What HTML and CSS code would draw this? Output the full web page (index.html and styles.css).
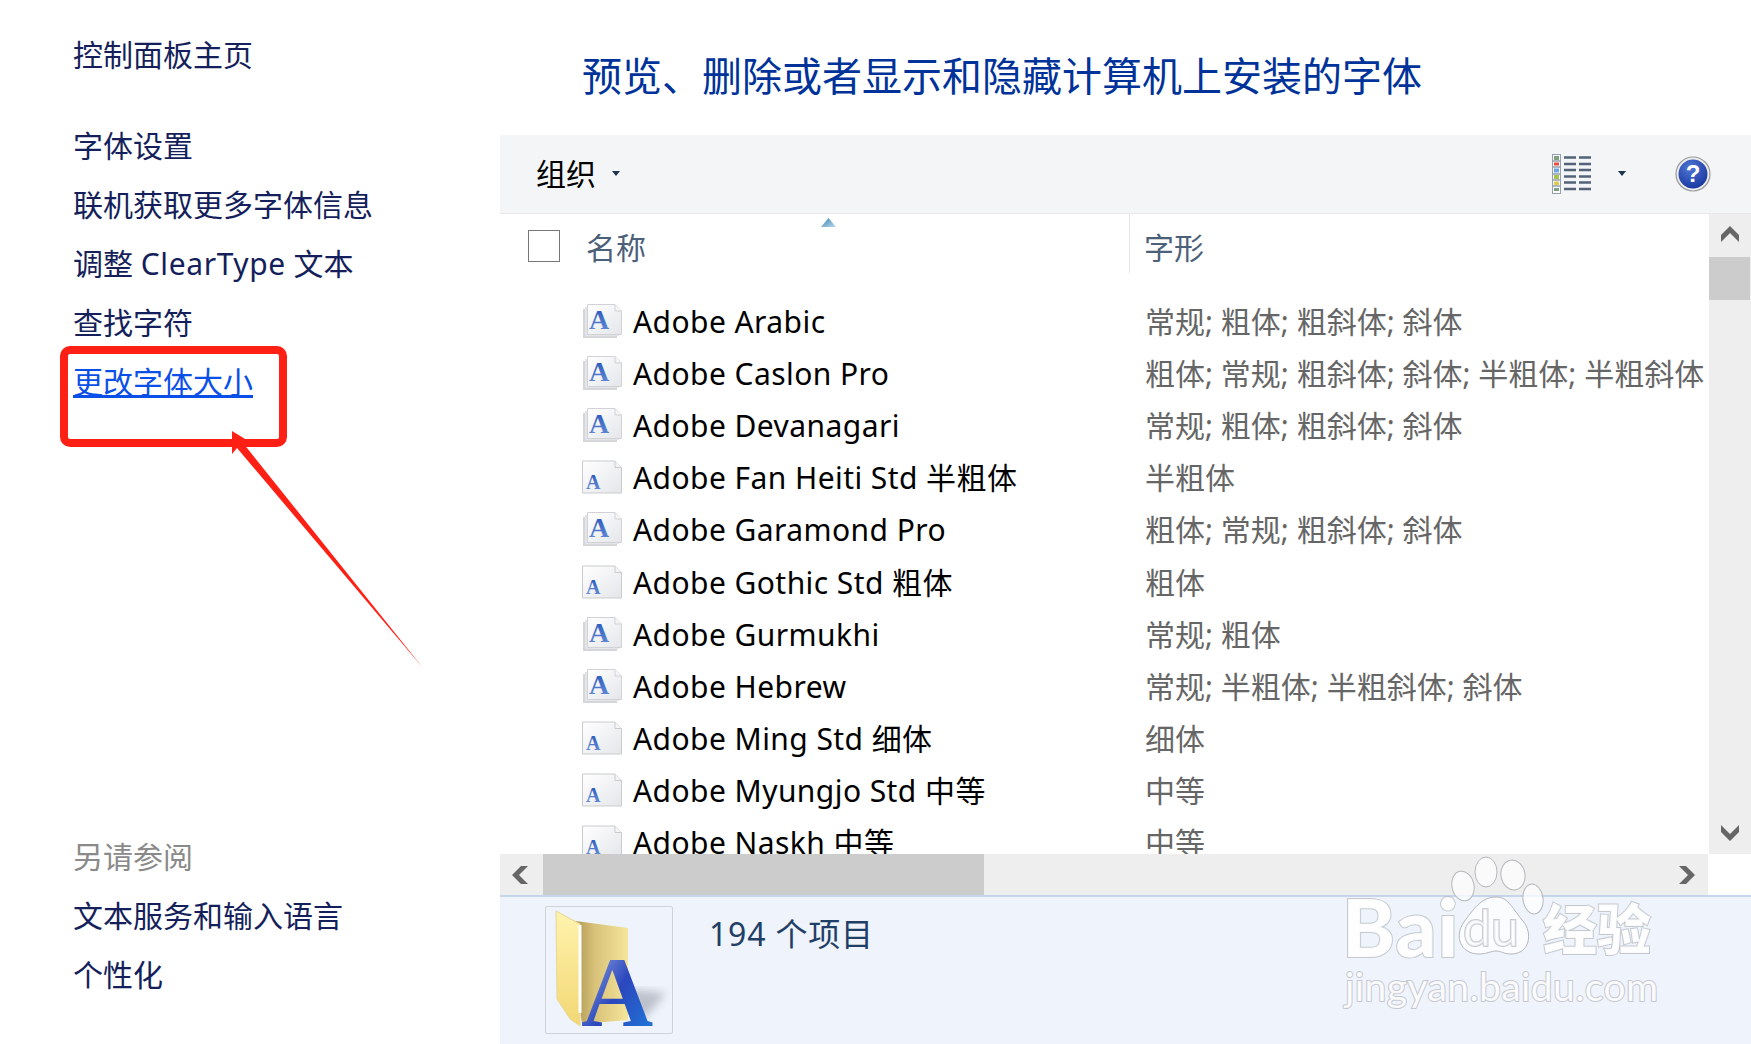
FILE: index.html
```html
<!DOCTYPE html>
<html lang="zh-CN">
<head>
<meta charset="utf-8">
<title>字体</title>
<link rel="stylesheet" href="styles.css">
</head>
<body>
<svg class="defs" width="0" height="0" aria-hidden="true">
  <defs>
    <linearGradient id="page" x1="0" y1="0" x2="1" y2="1"><stop offset="0" stop-color="#fff"/><stop offset="1" stop-color="#e4e6ea"/></linearGradient>
    <linearGradient id="ink" x1="0" y1="0" x2="0" y2="1"><stop offset="0" stop-color="#1f4fb5"/><stop offset="1" stop-color="#6d93dc"/></linearGradient>
    <linearGradient id="folderBack" x1="0" y1="0" x2="1" y2="0"><stop offset="0" stop-color="#a08a45"/><stop offset=".45" stop-color="#d9c27a"/><stop offset="1" stop-color="#f5e59a"/></linearGradient>
    <linearGradient id="folderFront" x1="0" y1="0" x2="0" y2="1"><stop offset="0" stop-color="#fff3ad"/><stop offset="1" stop-color="#f2d774"/></linearGradient>
    <linearGradient id="bigA" x1="0" y1="0" x2="1" y2="1"><stop offset="0" stop-color="#b4c4ee"/><stop offset=".5" stop-color="#2b47bd"/><stop offset="1" stop-color="#1c7fdc"/></linearGradient>
    <linearGradient id="sortArrow" x1="0" y1="0" x2="1" y2="1"><stop offset="0" stop-color="#3c7fae"/><stop offset="1" stop-color="#b9dcef"/></linearGradient>
    <radialGradient id="helpBall" cx=".4" cy=".3" r=".8"><stop offset="0" stop-color="#4f76d6"/><stop offset="1" stop-color="#14329a"/></radialGradient>
    <filter id="soft"><feGaussianBlur stdDeviation="4"/></filter>
    <symbol id="font-stack" viewBox="0 0 40 34">
      <path d="M1 5h3v27h31v2H1z" fill="#d4d6da"/>
      <path d="M3 3h3v27h31v2H3z" fill="#e3e5e8"/>
      <path d="M5.500 .5H33L39.500 7V30.500H5.500z" fill="url(#page)" stroke="#d0d2d6"/>
      <path d="M33 .5V7h6.500" fill="#f4f4f6" stroke="#d0d2d6"/>
      <text x="7" y="25" class="glyph glyph-big" fill="url(#ink)">A</text>
    </symbol>
    <symbol id="font-single" viewBox="0 0 40 33">
      <path d="M.5 .5H33L39.500 7V32.500H.5z" fill="url(#page)" stroke="#c9cbcf"/>
      <path d="M33 .5V7h6.500" fill="#f4f4f6" stroke="#c9cbcf"/>
      <text x="4" y="28" class="glyph glyph-small" fill="url(#ink)">A</text>
    </symbol>
  </defs>
</svg>

<div class="window">
  <aside class="side">
    <nav class="side-top">
      <a class="side-link home">控制面板主页</a>
      <a class="side-link">字体设置</a>
      <a class="side-link">联机获取更多字体信息</a>
      <a class="side-link">调整 <span class="latin">ClearType</span> 文本</a>
      <a class="side-link">查找字符</a>
      <a class="side-link active">更改字体大小</a>
    </nav>
    <nav class="side-bottom">
      <span class="side-link muted">另请参阅</span>
      <a class="side-link">文本服务和输入语言</a>
      <a class="side-link">个性化</a>
    </nav>
  </aside>

  <main class="main">
    <h1 class="title">预览、删除或者显示和隐藏计算机上安装的字体</h1>

    <div class="toolbar">
      <span class="organize">组织</span>
      <svg class="caret caret-left" width="8" height="5" viewBox="0 0 8 5"><path d="M0 0h8L4 5z" fill="#1e3350"/></svg>
      <svg class="view-icon" width="40" height="40" viewBox="0 0 40 40">
        <rect x="0.500" y="0.500" width="8" height="39" fill="#fff" stroke="#93a0ae"/>
        <path d="M0 7h9M0 13h9M0 20h9M0 26h9M0 32h9" stroke="#93a0ae" stroke-width="1.500"/>
        <rect x="2" y="2" width="5" height="4" fill="#7f9f80"/><rect x="2" y="8.500" width="5" height="3" fill="#ee4a3c"/>
        <rect x="2" y="14.500" width="5" height="4" fill="#6ea3e4"/><rect x="2" y="21" width="5" height="4" fill="#a9c34f"/>
        <rect x="2" y="27.500" width="5" height="3.500" fill="#dccb4d"/><rect x="2" y="34" width="5" height="3" fill="#7f9f80"/>
        <path d="M12 3.500h12m3 0h12M12 10h12m3 0h12M12 16h12m3 0h12M12 22.500h12m3 0h12M12 28.500h12m3 0h12M12 35h12m3 0h12" stroke="#52637a" stroke-width="2.400"/>
      </svg>
      <svg class="caret caret-right" width="8" height="5" viewBox="0 0 8 5"><path d="M0 0h8L4 5z" fill="#1e3350"/></svg>
      <svg class="help" width="36" height="36" viewBox="0 0 36 36">
        <circle cx="18" cy="18" r="17" fill="#eee" stroke="#9a9a9a" stroke-width="1.200"/>
        <circle cx="18" cy="18" r="14.500" fill="url(#helpBall)"/>
        <text x="18" y="26" class="help-mark">?</text>
      </svg>
    </div>

    <div class="view">
      <div class="list">
        <div class="list-head">
          <span class="check"></span>
          <span class="head-name">名称</span>
          <svg class="sort" width="15" height="9" viewBox="0 0 15 9"><path d="M7.500 0L15 9H0z" fill="url(#sortArrow)"/></svg>
          <span class="head-style">字形</span>
        </div>
        <div class="rows">
          <div class="row"><svg class="file"><use href="#font-stack"/></svg><span class="name">Adobe Arabic</span><span class="style">常规; 粗体; 粗斜体; 斜体</span></div>
          <div class="row"><svg class="file"><use href="#font-stack"/></svg><span class="name">Adobe Caslon Pro</span><span class="style">粗体; 常规; 粗斜体; 斜体; 半粗体; 半粗斜体</span></div>
          <div class="row"><svg class="file"><use href="#font-stack"/></svg><span class="name">Adobe Devanagari</span><span class="style">常规; 粗体; 粗斜体; 斜体</span></div>
          <div class="row"><svg class="file"><use href="#font-single"/></svg><span class="name">Adobe Fan Heiti Std 半粗体</span><span class="style">半粗体</span></div>
          <div class="row"><svg class="file"><use href="#font-stack"/></svg><span class="name">Adobe Garamond Pro</span><span class="style">粗体; 常规; 粗斜体; 斜体</span></div>
          <div class="row"><svg class="file"><use href="#font-single"/></svg><span class="name">Adobe Gothic Std 粗体</span><span class="style">粗体</span></div>
          <div class="row"><svg class="file"><use href="#font-stack"/></svg><span class="name">Adobe Gurmukhi</span><span class="style">常规; 粗体</span></div>
          <div class="row"><svg class="file"><use href="#font-stack"/></svg><span class="name">Adobe Hebrew</span><span class="style">常规; 半粗体; 半粗斜体; 斜体</span></div>
          <div class="row"><svg class="file"><use href="#font-single"/></svg><span class="name">Adobe Ming Std 细体</span><span class="style">细体</span></div>
          <div class="row"><svg class="file"><use href="#font-single"/></svg><span class="name">Adobe Myungjo Std 中等</span><span class="style">中等</span></div>
          <div class="row"><svg class="file"><use href="#font-single"/></svg><span class="name">Adobe Naskh 中等</span><span class="style">中等</span></div>
        </div>
      </div>
      <div class="vscroll">
        <svg class="v-arrow" width="18" height="16" viewBox="0 0 18 16"><path d="M9 0l9 9v7L9 7l-9 9V9z" fill="#666"/></svg>
        <div class="v-thumb"></div>
        <svg class="v-arrow v-down" width="18" height="16" viewBox="0 0 18 16"><path d="M9 16L0 7V0l9 9 9-9v7z" fill="#666"/></svg>
      </div>
    </div>

    <div class="hbar">
      <div class="hscroll">
        <svg class="h-arrow" width="16" height="18" viewBox="0 0 16 18"><path d="M0 9l9-9h7L7 9l9 9H9z" fill="#666"/></svg>
        <div class="h-thumb"></div>
        <svg class="h-arrow h-right" width="16" height="18" viewBox="0 0 16 18"><path d="M16 9l-9 9H0l9-9-9-9h7z" fill="#666"/></svg>
      </div>
      <div class="corner"></div>
    </div>

    <div class="status">
      <div class="thumb">
        <svg width="126" height="126" viewBox="0 0 126 126">
          <path d="M84 82l36 4-22 26-10-4z" fill="#8a8f9c" opacity=".5" filter="url(#soft)"/>
          <path d="M22 13l60 8v92l-46 4z" fill="url(#folderBack)"/>
          <path d="M10 4l24 13v94l0 8-10-7L11 92z" fill="url(#folderFront)" stroke="#e8d69a"/>
          <path d="M34 18v88" stroke="#fff" stroke-width="3"/>
          <text x="35" y="119" class="folder-a" fill="url(#bigA)">A</text>
        </svg>
      </div>
      <span class="count">194 个项目</span>
    </div>
  </main>
</div>

<svg class="annotation" width="460" height="360" viewBox="0 0 460 360" aria-hidden="true">
  <rect x="64" y="4" width="219" height="93" rx="6" fill="none" stroke="#fe2015" stroke-width="8"/>
  <path d="M232 85l18 11-7 1 180 225L237 102l-5 6z" fill="#fe2015"/>
</svg>

<div class="watermark" aria-hidden="true">
  <span class="wm-bai">Bai</span>
  <div class="wm-paw">
    <svg width="94" height="100" viewBox="0 0 94 100">
      <g fill="#fff" fill-opacity=".72" stroke="#b5b7bd" stroke-width="1">
        <ellipse cx="13" cy="30" rx="11" ry="15" transform="rotate(-12 13 30)"/>
        <ellipse cx="36" cy="16" rx="11" ry="15"/>
        <ellipse cx="63" cy="19" rx="12" ry="15" transform="rotate(-10 63 19)"/>
        <ellipse cx="83" cy="43" rx="10" ry="15" transform="rotate(-8 83 43)"/>
        <path d="M46 41c13 0 17 13 27 24 10 12 7 33-12 33-7 0-10-3-15-3s-9 3-17 3C10 98 4 80 14 66c9-12 17-25 32-25z"/>
      </g>
    </svg>
    <span class="wm-du">du</span>
  </div>
  <span class="wm-cn">经验</span>
  <span class="wm-url">jingyan.baidu.com</span>
</div>
</body>
</html>
```

FILE: styles.css
```css
* { box-sizing: border-box; }
html, body { margin: 0; padding: 0; background: #fff; }
body {
  position: relative;
  width: 1751px;
  height: 1044px;
  overflow: hidden;
  font-family: "Noto Sans", "Noto Sans CJK SC", sans-serif;
  font-size: 30px;
  color: #000;
}
.defs { position: absolute; }
.glyph { font-family: "Liberation Serif", serif; font-weight: 700; }
.glyph-big { font-size: 28px; }
.glyph-small { font-size: 20px; }

.window { display: flex; width: 1751px; height: 1044px; }

.side {
  width: 500px;
  flex: none;
  padding: 25px 0 40px 73px;
  display: flex;
  flex-direction: column;
  justify-content: space-between;
}
.side-top, .side-bottom { display: flex; flex-direction: column; }
.side-link {
  display: block;
  height: 59px;
  line-height: 59px;
  color: #151f5b;
  white-space: nowrap;
}
.latin { letter-spacing: .6px; }
.home { margin-bottom: 32px; }
.active { color: #0a50e8; text-decoration: underline; }
.muted { color: #8a8a8a; }

.main { flex: 1; min-width: 0; display: flex; flex-direction: column; }
.title {
  margin: 0;
  height: 135px;
  padding: 46px 0 0 82px;
  font-size: 40px;
  line-height: 60px;
  font-weight: 400;
  color: #003399;
  white-space: nowrap;
}

.toolbar {
  height: 79px;
  flex: none;
  display: flex;
  align-items: center;
  padding: 0 40px 1px 36px;
  background: #f4f5f7;
  border-bottom: 1px solid #e8e9ec;
}
.organize { line-height: 40px; }
.caret-left { margin-left: 16px; }
.view-icon { margin-left: auto; }
.caret-right { margin: 0 49px 0 26px; }

.help-mark {
  font-family: "Liberation Sans", sans-serif;
  font-weight: 700;
  font-size: 24px;
  text-anchor: middle;
  fill: #fff;
}

.view { height: 640px; flex: none; display: flex; }
.list { flex: 1; min-width: 0; overflow: hidden; }
.list-head { position: relative; height: 81px; display: flex; align-items: flex-start; padding: 16px 0 0 28px; }
.check { width: 32px; height: 32px; border: 1px solid #777; flex: none; background: #fff; }
.head-name { margin: -6px 0 0 26px; line-height: 48px; color: #4c607a; width: 543px; }
.sort { position: absolute; left: 321px; top: 4px; }
.head-style {
  margin-top: -16px;
  padding: 10px 0 0 14px;
  height: 59px;
  line-height: 48px;
  border-left: 1px solid #e6e8ec;
  color: #4c607a;
}
.rows { display: flex; flex-direction: column; }
.row { height: 52.1px; flex: none; display: flex; align-items: center; padding-left: 82px; white-space: nowrap; }
.file { width: 40px; height: 34px; flex: none; margin-right: 11px; }
.name { width: 512px; flex: none; color: #000; line-height: 40px; letter-spacing: .43px; margin-top: 2px; }
.style { color: #666; line-height: 40px; margin-top: 2px; }

.vscroll { width: 42px; flex: none; background: #eee; display: flex; flex-direction: column; align-items: center; position: relative; }
.v-arrow { margin-top: 12px; height: 16px; flex: none; }
.v-thumb { width: 41px; align-self: flex-start; height: 43px; margin-top: 15px; background: #ccc; }
.v-down { margin-top: auto; margin-bottom: 13px; }

.hbar { height: 43px; flex: none; display: flex; border-bottom: 2px solid #c6d6ea; }
.hscroll { width: 1208px; background: #eee; display: flex; align-items: center; padding-right: 5px; }
.h-arrow { margin-left: 12px; flex: none; }
.h-thumb { width: 441px; height: 41px; align-self: flex-start; margin-left: 15px; background: #ccc; }
.h-right { margin-left: auto; margin-right: 8px; }
.corner { flex: 1; background: #fff; }

.status { flex: 1; display: flex; align-items: flex-start; padding: 9px 0 0 45px; background: #eff3fb; }
.thumb { width: 128px; height: 128px; border: 1px solid #cfd2d8; border-radius: 2px; flex: none; }
.thumb svg { display: block; overflow: visible; }
.count { margin: -2px 0 0 36px; line-height: 60px; font-size: 32px; letter-spacing: .8px; color: #1f3f66; }
.folder-a { font-family: "Liberation Serif", serif; font-weight: 700; font-size: 100px; }

.annotation { position: absolute; left: 0; top: 346px; pointer-events: none; }

.watermark { position: absolute; left: 1345px; top: 856px; width: 330px; height: 150px; color: #fff; pointer-events: none; }
.wm-bai, .wm-cn, .wm-url, .wm-du {
  position: absolute;
  font-family: "Lato", "Noto Sans CJK SC", sans-serif;
  color: rgba(255,255,255,.9);
  -webkit-text-stroke: 2px rgba(180,182,190,.7);
  paint-order: stroke fill;
  white-space: nowrap;
}
.wm-bai { left: -3px; top: 30px; font-size: 80px; line-height: 80px; font-weight: 900; letter-spacing: 1px; }
.wm-paw { position: absolute; left: 105px; top: 0; width: 94px; height: 100px; }
.wm-du { left: 13px; top: 46px; font-size: 50px; line-height: 50px; font-weight: 400; color: rgba(255,255,255,.6); }
.wm-cn { left: 198px; top: 42px; font-size: 54px; line-height: 64px; font-weight: 900; }
.wm-url { left: 0; top: 108px; font-size: 39px; line-height: 44px; font-weight: 400; letter-spacing: .4px; }
```
